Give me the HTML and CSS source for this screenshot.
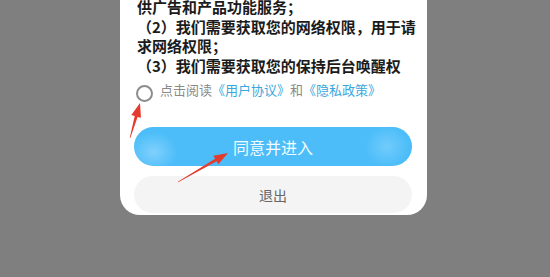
FILE: index.html
```html
<!DOCTYPE html>
<html lang="zh-CN">
<head>
<meta charset="utf-8">
<title>隐私政策</title>
<link rel="stylesheet" href="styles.css">
</head>
<body>
<div class="card">
  <div class="content">
    <p>供广告和产品功能服务；</p>
    <p>（2）我们需要获取您的网络权限，用于请求网络权限；</p>
    <p>（3）我们需要获取您的保持后台唤醒权限，用于保持应用在后台运行；</p>
  </div>
  <div class="agree">
    <span class="check"></span>
    <div class="agree-text">
      <span>点击阅读</span><a class="link">《用户协议》</a><span>和</span><a class="link">《隐私政策》</a>
    </div>
  </div>
  <div class="btn btn-primary">同意并进入</div>
  <div class="btn btn-secondary">退出</div>
</div>
<svg class="annot" width="550" height="277" viewBox="0 0 550 277">
  <polygon points="140,103 140.96,117.85 137.6,116.9 130.3,138.1 129.7,137.9 134.7,116.1 131.34,115.1" fill="#e53a2e"/>
  <polygon points="228,153 218.4,164.36 216.64,161.33 178.15,182.26 177.85,181.74 215.14,158.73 213.38,155.7" fill="#e53a2e"/>
</svg>
</body>
</html>
```
FILE: styles.css
```css
html, body {
  margin: 0;
  padding: 0;
}
body {
  width: 550px;
  height: 277px;
  overflow: hidden;
  background: #7f7f7f;
  font-family: "Noto Sans CJK SC", "Noto Sans", sans-serif;
  position: relative;
}
.card {
  width: 307px;
  margin-left: 120px;
  margin-top: -3px;
  background: #fff;
  border-radius: 0 0 20px 20px;
  padding: 0 15px 2px 14px;
  box-sizing: border-box;
  display: flex;
  flex-direction: column;
}
.content {
  width: 284px;
  height: 78px;
  margin-left: 3px;
  overflow: hidden;
  font-size: 15px;
  line-height: 19.5px;
  font-weight: 700;
  color: #1b1b1b;
}
.content p {
  margin: 0;
}
.agree {
  margin-top: 10px;
  display: flex;
  align-items: flex-start;
  gap: 7px;
  padding-left: 2px;
}
.check {
  width: 17px;
  height: 17px;
  box-sizing: border-box;
  border: 2px solid #8c8c8c;
  border-radius: 50%;
  flex: none;
}
.agree-text {
  display: flex;
  font-size: 13px;
  line-height: 19px;
  margin-top: -5.5px;
  color: #8a8a8a;
  white-space: nowrap;
}
.link {
  color: #3aa7dc;
}
.btn {
  height: 39px;
  border-radius: 20px;
  display: flex;
  align-items: center;
  justify-content: center;
}
.btn-primary {
  margin-top: 25px;
  background:
    radial-gradient(ellipse 24px 20px at 7% 64%, rgba(170, 225, 255, 0.55), rgba(170, 225, 255, 0) 100%),
    radial-gradient(ellipse 22px 20px at 91% 50%, rgba(170, 225, 255, 0.4), rgba(170, 225, 255, 0) 100%),
    #4cbdf9;
  color: #f2fbff;
  font-size: 16px;
}
.btn-secondary {
  margin-top: 10px;
  height: 37px;
  background: #f4f4f4;
  color: #666;
  font-size: 14px;
}
.annot {
  position: absolute;
  left: 0;
  top: 0;
  pointer-events: none;
}
```
